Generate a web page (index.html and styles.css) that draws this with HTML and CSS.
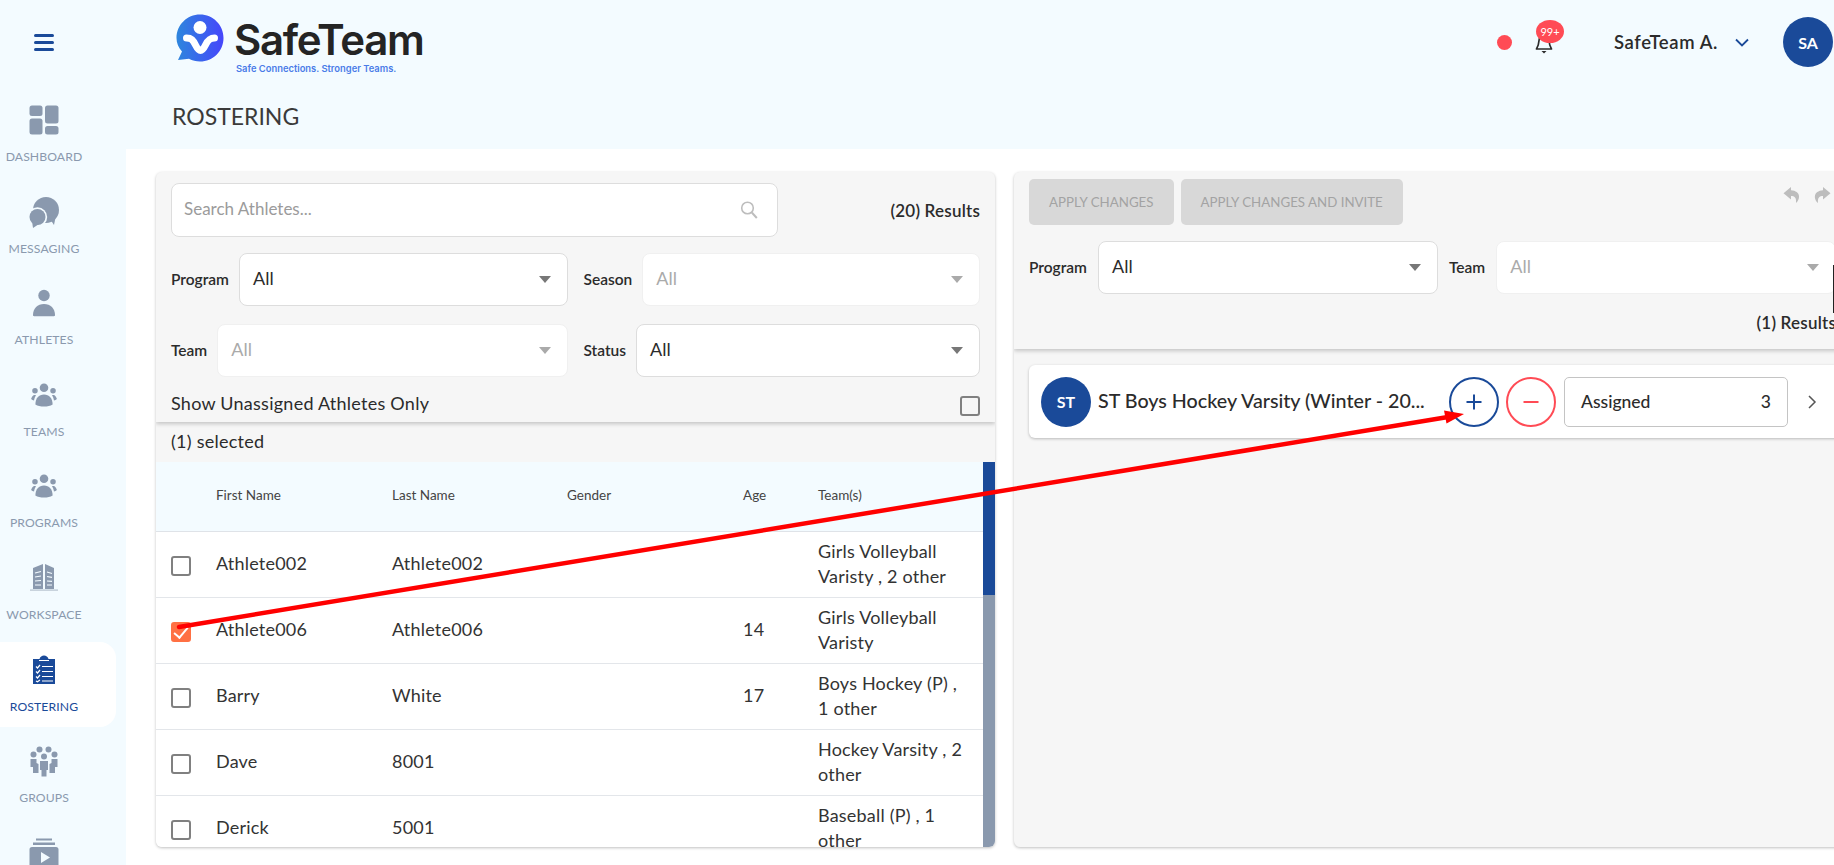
FILE: index.html
```html
<!DOCTYPE html>
<html lang="en">
<head>
  <meta charset="UTF-8">
  <meta name="viewport" content="width=device-width, initial-scale=1.0">
  <title>SafeTeam - Rostering</title>
  <link rel="stylesheet" href="styles.css">
</head>
<body>
  <div class="app">
    <aside class="sidebar">
      <div class="menu-btn"><span></span><span></span><span></span></div>
      <nav class="nav">
        <a class="nav-item">
          <svg class="nav-icon" viewBox="0 0 32 32"><rect x="1.5" y="1.5" width="13" height="10.5" rx="2.5"/><rect x="17" y="1.5" width="13.5" height="18" rx="2.5"/><rect x="1.5" y="14.5" width="13" height="16" rx="2.5"/><rect x="17" y="22" width="13.5" height="8.5" rx="2.5"/></svg>
          <span>Dashboard</span>
        </a>
        <a class="nav-item">
          <svg class="nav-icon" viewBox="0 0 32 32"><circle cx="18" cy="14" r="13"/><path d="M20 20l6 9 2-10z"/><circle class="nav-bg" cx="9.500" cy="21" r="9.700"/><circle cx="9.500" cy="21" r="8"/><path d="M4 25l1 7 6-4z"/></svg>
          <span>Messaging</span>
        </a>
        <a class="nav-item">
          <svg class="nav-icon" viewBox="0 0 32 32"><circle cx="16" cy="8.500" r="5.700"/><path d="M5 28c0-6.500 4.500-11 11-11s11 4.500 11 11c0 .8-.5 1.200-1.200 1.200H6.200C5.500 29.200 5 28.800 5 28z"/></svg>
          <span>Athletes</span>
        </a>
        <a class="nav-item">
          <svg class="nav-icon" viewBox="0 0 32 32"><use href="#people"/></svg>
          <span>Teams</span>
        </a>
        <a class="nav-item">
          <svg class="nav-icon" viewBox="0 0 32 32"><use href="#people"/></svg>
          <span>Programs</span>
        </a>
        <a class="nav-item">
          <svg class="nav-icon" viewBox="0 0 32 32"><path d="M5 6l10-4v25H5z"/><path d="M17 2l9 4v21h-9z"/><path d="M2 27.500h28v1.200H2z" opacity=".6"/><path class="nav-cut" d="M7 11l6-1.500M7 15l6-1M7 19l6-.5M7 23h6M19 10l5 1.500M19 14.500l5 .8M19 19l5 .3M19 23h5"/></svg>
          <span>Workspace</span>
        </a>
        <a class="nav-item active">
          <svg class="nav-icon" viewBox="0 0 32 32"><path d="M5 5h6.500c.5-2 2.500-3.500 4.500-3.500s4 1.500 4.500 3.500H27v25H5z"/><path class="nav-cut" d="M11 6.500h10M8 12.500l1.500 1.500 2.500-3M8 17.500l1.500 1.500 2.500-3M8 22.500l1.500 1.500 2.500-3M8 27l1.500 .8 2.500-1.800M14 12.500h11M14 17.500h11M14 22.500h11M14 27h11"/></svg>
          <span>Rostering</span>
        </a>
        <a class="nav-item">
          <svg class="nav-icon" viewBox="0 0 32 32"><circle cx="11.500" cy="4.500" r="3"/><circle cx="20.500" cy="4.500" r="3"/><circle cx="5.500" cy="9.500" r="3"/><circle cx="26.500" cy="9.500" r="3"/><circle cx="16" cy="11.500" r="3"/><path d="M2.500 14h6v4l2 1v9H5v-6H2.500zM29.500 14h-6v4l-2 1v9H27v-6h2.500z"/><path d="M12 16h8v9h-1.500v6.500h-5V25H12z"/></svg>
          <span>Groups</span>
        </a>
        <a class="nav-item">
          <svg class="nav-icon" viewBox="0 0 32 32"><path d="M8 1.500h16v2H8zM5 5.500h22v2.500H5z"/><path fill-rule="evenodd" d="M4 10h24c1.600 0 2.500 1 2.500 2.500v16c0 1.600-.9 2.500-2.500 2.500H4c-1.600 0-2.500-.9-2.500-2.500v-16C1.500 11 2.400 10 4 10zm9 5v11l9-5.500z"/></svg>
        </a>
      </nav>
    </aside>

    <div class="main">
      <header class="header">
        <div class="topbar">
          <div class="logo">
            <svg class="logo-icon" viewBox="0 0 48 48">
              <defs>
                <linearGradient id="logoGrad" x1="0" y1="0" x2="1" y2="0">
                  <stop offset="0" stop-color="#2d86dd"/>
                  <stop offset="1" stop-color="#4646fb"/>
                </linearGradient>
              </defs>
              <path fill="url(#logoGrad)" d="M24 0.500c13 0 23.500 10.500 23.500 23.500S37 47.500 24 47.500c-4 0-7.700-1-11-2.700L2 46l4-8.500C2.500 33.500.5 29 .5 24 .5 11 11 .5 24 .5z"/>
              <circle cx="24" cy="13.500" r="6.500" fill="#fff"/>
              <path d="M10.500 24c5 0 6.500 2 9 7 2 4 3.500 5.500 5 5.500s3-1.500 5-5.500c2.500-5 4.500-7 9-7" fill="none" stroke="#fff" stroke-width="7" stroke-linecap="round"/>
            </svg>
            <div class="logo-text">
              <div class="logo-name">SafeTeam</div>
              <div class="logo-tag">Safe Connections. Stronger Teams.</div>
            </div>
          </div>
          <div class="user-area">
            <span class="status-dot"></span>
            <div class="bell">
              <svg viewBox="0 0 18 22" width="18" height="22"><path d="M9 2c3 0 4.500 2.500 4.800 5.500.3 3.500.7 6 2.700 9.500H1.500c2-3.500 2.400-6 2.700-9.500C4.500 4.500 6 2 9 2z" fill="none" stroke="#2b2b2b" stroke-width="1.700" stroke-linejoin="round"/><path d="M6.500 19h5L9 21.500z" fill="#2b2b2b"/></svg>
              <span class="bell-badge">99+</span>
            </div>
            <span class="user-name">SafeTeam A.</span>
            <svg class="user-chevron" viewBox="0 0 14 9" width="14" height="9"><path d="M1 1.500l6 6 6-6" fill="none" stroke="#1a4a99" stroke-width="1.800"/></svg>
            <span class="avatar">SA</span>
          </div>
        </div>
        <h1 class="page-title">ROSTERING</h1>
      </header>

      <div class="content">
        <section class="panel panel-left">
          <div class="filters">
            <div class="search-row">
              <div class="search-box">
                <span class="search-text">Search Athletes...</span>
                <svg viewBox="0 0 20 20" width="20" height="20"><circle cx="8.500" cy="8" r="5.800" fill="none" stroke="#bdbdbd" stroke-width="1.600"/><path d="M12.800 12.500l5 5.500" stroke="#bdbdbd" stroke-width="2"/></svg>
              </div>
              <span class="results">(20) Results</span>
            </div>
            <div class="filter-row">
              <div class="filter-field">
                <label>Program</label>
                <div class="select"><span>All</span><i class="caret"></i></div>
              </div>
              <div class="filter-field">
                <label>Season</label>
                <div class="select disabled"><span>All</span><i class="caret"></i></div>
              </div>
            </div>
            <div class="filter-row">
              <div class="filter-field">
                <label>Team</label>
                <div class="select disabled"><span>All</span><i class="caret"></i></div>
              </div>
              <div class="filter-field">
                <label>Status</label>
                <div class="select"><span>All</span><i class="caret"></i></div>
              </div>
            </div>
            <div class="unassigned-row">
              <span>Show Unassigned Athletes Only</span>
              <i class="check"></i>
            </div>
          </div>
          <div class="selected-count">(1) selected</div>
          <div class="table-wrap">
            <table class="athletes">
              <colgroup>
                <col class="col-check"><col class="col-first"><col class="col-last"><col class="col-gender"><col class="col-age"><col>
              </colgroup>
              <thead>
                <tr><th></th><th>First Name</th><th>Last Name</th><th>Gender</th><th>Age</th><th>Team(s)</th></tr>
              </thead>
              <tbody>
                <tr><td><i class="check"></i></td><td>Athlete002</td><td>Athlete002</td><td></td><td></td><td>Girls Volleyball Varisty , 2 other</td></tr>
                <tr><td><i class="check checked"></i></td><td>Athlete006</td><td>Athlete006</td><td></td><td>14</td><td>Girls Volleyball Varisty</td></tr>
                <tr><td><i class="check"></i></td><td>Barry</td><td>White</td><td></td><td>17</td><td>Boys Hockey (P) , 1 other</td></tr>
                <tr><td><i class="check"></i></td><td>Dave</td><td>8001</td><td></td><td></td><td>Hockey Varsity , 2 other</td></tr>
                <tr><td><i class="check"></i></td><td>Derick</td><td>5001</td><td></td><td></td><td>Baseball (P) , 1 other</td></tr>
              </tbody>
            </table>
            <div class="scrollbar"><div class="scroll-thumb"></div></div>
          </div>
        </section>

        <section class="panel panel-right">
          <div class="filters filters-right">
            <div class="action-row">
              <button class="btn-disabled" type="button">Apply Changes</button>
              <button class="btn-disabled" type="button">Apply Changes and Invite</button>
              <div class="history">
                <svg viewBox="0 0 18 18" width="18" height="18"><path id="undoShape" d="M8 1L0.500 7.200 8 13.500V10c3.500 0 5.500 1.500 5 7 4.500-4 5-12-5-12.800z"/></svg>
                <svg class="flip" viewBox="0 0 18 18" width="18" height="18"><use href="#undoShape"/></svg>
              </div>
            </div>
            <div class="filter-row">
              <div class="filter-field">
                <label>Program</label>
                <div class="select"><span>All</span><i class="caret"></i></div>
              </div>
              <div class="filter-field">
                <label>Team</label>
                <div class="select disabled"><span>All</span><i class="caret"></i></div>
              </div>
            </div>
            <div class="results-row"><span class="results">(1) Results</span></div>
          </div>
          <div class="team-card">
            <span class="avatar team-avatar">ST</span>
            <span class="team-name">ST Boys Hockey Varsity (Winter - 20...</span>
            <span class="round-btn plus"><svg viewBox="0 0 20 20" width="20" height="20"><path d="M10 2.500v15M2.500 10h15" stroke="#1a4a99" stroke-width="2"/></svg></span>
            <span class="round-btn minus"><svg viewBox="0 0 20 20" width="20" height="20"><path d="M2.500 10h15" stroke="#ff4b55" stroke-width="2"/></svg></span>
            <div class="assigned"><span>Assigned</span><span>3</span></div>
            <svg class="card-chevron" viewBox="0 0 10 16" width="10" height="16"><path d="M2 2l6 6-6 6" fill="none" stroke="#555" stroke-width="1.500"/></svg>
          </div>
        </section>
      </div>
    </div>
  </div>

  <svg class="defs" width="0" height="0">
    <g id="people" transform="translate(16 16) scale(.86) translate(-16 -16)">
      <circle cx="16" cy="7.500" r="5"/><circle cx="5.500" cy="11" r="3.200"/><circle cx="26.500" cy="11" r="3.200"/>
      <path d="M6 27c0-7 4-11.500 10-11.500S26 20 26 27c-2.500 1.600-6 2.500-10 2.500S8.500 28.600 6 27z"/>
      <path d="M3.500 16.500c1-.6 2-.7 3.200-.2-1.200 1.800-2 4-2.300 6.200-1.300-.4-2.400-1-3.400-1.800.3-1.500 1.200-3.100 2.500-4.200zM28.500 16.500c-1-.6-2-.7-3.200-.2 1.200 1.800 2 4 2.300 6.200 1.300-.4 2.400-1 3.400-1.800-.3-1.500-1.200-3.100-2.500-4.200z"/>
    </g>
  </svg>

  <!-- annotation drawn over the screenshot -->
  <svg class="annotation" viewBox="0 0 1834 865" width="1834" height="865">
    <line x1="179" y1="627" x2="1448" y2="417" stroke="#ff0000" stroke-width="4.500" stroke-linecap="round"/>
    <polygon points="1464,414 1446.500,423.500 1444,410.500" fill="#ff0000"/>
  </svg>
  <div class="cursor-edge"></div>
</body>
</html>
```

FILE: styles.css
```css
* {
  box-sizing: border-box;
}

html, body {
  margin: 0;
  height: 100%;
  overflow: hidden;
}

body {
  font-family: "Lato", "Liberation Sans", sans-serif;
  color: #2b2b2b;
  background-color: #ffffff;
}

.app {
  display: flex;
  height: 865px;
  width: 1834px;
  overflow: hidden;
}

/* sidebar */
.sidebar {
  width: 126px;
  flex-shrink: 0;
  background-color: #f3fbff;
  overflow: hidden;
}

.menu-btn {
  width: 20px;
  height: 17px;
  margin: 34px 0 41px 34px;
  display: flex;
  flex-direction: column;
  justify-content: space-between;
}

.menu-btn span {
  height: 3px;
  border-radius: 2px;
  background-color: #1a4a99;
}

.nav-item {
  display: flex;
  flex-direction: column;
  align-items: center;
  width: 116px;
  height: 85px;
  margin-bottom: 6.6px;
  padding: 12px 28px 0 0;
  color: #8a99ae;
  font-size: 12.200px;
  letter-spacing: .1px;
  text-transform: uppercase;
  border-radius: 0 16px 16px 0;
}

.nav-icon {
  width: 32px;
  height: 32px;
  fill: #8a99ae;
  margin-bottom: 13px;
  flex-shrink: 0;
}

.nav-cut {
  fill: none;
  stroke: #f3fbff;
  stroke-width: 1.2;
}

.nav-bg {
  fill: #f3fbff;
}

.nav-item.active {
  background-color: #ffffff;
  color: #1a4a99;
}

.nav-item.active .nav-icon {
  fill: #1a4a99;
}

.nav-item.active .nav-cut {
  stroke: #ffffff;
}

/* header */
.main {
  flex: 1;
  min-width: 0;
  display: flex;
  flex-direction: column;
}

.header {
  background-color: #f3fbff;
  height: 149px;
  flex-shrink: 0;
}

.topbar {
  height: 84px;
  display: flex;
  align-items: center;
  padding-left: 50px;
}

.logo {
  display: flex;
  align-items: flex-start;
  margin-top: 4px;
}

.logo-icon {
  width: 48px;
  height: 48px;
  margin-right: 10px;
}

.logo-text {
  margin-top: 1px;
}

.logo-name {
  font-family: "Inter", sans-serif;
  font-size: 42px;
  font-weight: 600;
  letter-spacing: -1.3px;
  line-height: 46px;
  padding-top: 2px;
  color: #242424;
}

.logo-tag {
  font-family: "Inter", sans-serif;
  font-size: 9.400px;
  font-weight: 600;
  line-height: 12px;
  color: #4a7be8;
  margin-left: 2px;
}

.user-area {
  margin-left: auto;
  display: flex;
  align-items: center;
}

.status-dot {
  width: 15px;
  height: 15px;
  border-radius: 50%;
  background-color: #ff4b55;
  margin-right: 23px;
}

.bell {
  position: relative;
  width: 18px;
  height: 22px;
  margin-top: 2px;
  margin-right: 61px;
}

.bell-badge {
  position: absolute;
  left: 1px;
  top: -12px;
  width: 28px;
  height: 23px;
  border-radius: 50%;
  background-color: #ff4b55;
  color: #ffffff;
  font-size: 11px;
  line-height: 23px;
  text-align: center;
}

.user-name {
  font-size: 18.500px;
  font-weight: 600;
  letter-spacing: .6px;
  margin-right: 17px;
}

.user-chevron {
  margin-right: 34px;
}

.avatar {
  width: 50px;
  height: 50px;
  border-radius: 50%;
  background-color: #1a4a99;
  color: #ffffff;
  font-size: 16px;
  font-weight: 700;
  display: flex;
  align-items: center;
  justify-content: center;
  margin-right: 1px;
  flex-shrink: 0;
}

.page-title {
  margin: 0;
  padding-left: 46px;
  font-size: 23px;
  font-weight: 400;
  line-height: 65px;
  color: #3a3a3a;
}

/* panels */
.content {
  flex: 1;
  display: flex;
  gap: 19px;
  padding: 23px 0 18px 30px;
  min-height: 0;
}

.panel {
  width: 839px;
  flex-shrink: 0;
  background-color: #f6f6f6;
  border-radius: 6px;
  box-shadow: 0 1px 3px rgba(0, 0, 0, 0.25);
  overflow: hidden;
  display: flex;
  flex-direction: column;
}

.panel-right {
  width: 842px;
}

.filters {
  padding: 11px 15px 0;
  height: 250px;
  box-shadow: 0 2px 4px rgba(0, 0, 0, 0.2);
  position: relative;
  flex-shrink: 0;
}

.search-row {
  display: flex;
  align-items: center;
  justify-content: space-between;
  margin-bottom: 16px;
}

.search-box {
  width: 607px;
  height: 54px;
  background-color: #ffffff;
  border: 1px solid #dddddd;
  border-radius: 8px;
  padding: 0 18px 0 12px;
  display: flex;
  align-items: center;
  justify-content: space-between;
  font-size: 17px;
  color: #9b9b9b;
}

.search-text {
  margin-bottom: 3px;
}

.results {
  font-size: 17px;
  font-weight: 600;
  letter-spacing: .2px;
}

.filter-row {
  display: flex;
  gap: 16px;
  margin-bottom: 18px;
}

.filter-field {
  flex: 1;
  min-width: 0;
  display: flex;
  align-items: center;
}

.filter-field label {
  font-size: 15.500px;
  font-weight: 600;
  margin-right: 10px;
  margin-bottom: 2px;
}

.select {
  flex: 1;
  height: 53px;
  background-color: #ffffff;
  border: 1px solid #dddddd;
  border-radius: 8px;
  padding: 0 16px 0 13px;
  display: flex;
  align-items: center;
  justify-content: space-between;
  font-size: 18px;
}

.select span {
  margin-bottom: 3px;
}

.select.disabled {
  border-color: #f0f0f0;
  color: #aaaaaa;
}

.caret {
  width: 0;
  height: 0;
  border-left: 6.5px solid transparent;
  border-right: 6.5px solid transparent;
  border-top: 7px solid #777777;
}

.select.disabled .caret {
  border-top-color: #aaaaaa;
}

.unassigned-row {
  display: flex;
  align-items: center;
  justify-content: space-between;
  font-size: 18px;
  letter-spacing: .25px;
  margin-top: -3px;
}

.unassigned-row span {
  margin-bottom: 6px;
}

.check {
  display: block;
  width: 20px;
  height: 20px;
  border: 2px solid #808080;
  border-radius: 3px;
  background-color: #ffffff;
  position: relative;
}

.unassigned-row .check {
  background-color: transparent;
}

.check.checked {
  background-color: #ff7043;
  border-color: #ff7043;
}

.check.checked::after {
  content: "";
  position: absolute;
  left: 4px;
  top: 0;
  width: 6px;
  height: 12px;
  border: solid #ffffff;
  border-width: 0 2px 2px 0;
  transform: rotate(40deg);
}

.selected-count {
  height: 40px;
  line-height: 38px;
  padding-left: 15px;
  font-size: 18px;
  letter-spacing: .25px;
  flex-shrink: 0;
}

/* table */
.table-wrap {
  flex: 1;
  min-height: 0;
  display: flex;
  background-color: #ffffff;
  overflow: hidden;
}

.athletes {
  flex: 1;
  width: 827px;
  table-layout: fixed;
  border-collapse: collapse;
  align-self: flex-start;
}

.col-check { width: 60px; }
.col-first { width: 176px; }
.col-last { width: 175px; }
.col-gender { width: 176px; }
.col-age { width: 75px; }

.athletes th {
  height: 69px;
  background-color: #f3fbff;
  border-bottom: 1px solid #dfe3e8;
  font-size: 13.500px;
  font-weight: 400;
  color: #444444;
  text-align: left;
  padding: 0 0 2px;
}

.athletes td {
  height: 66px;
  border-bottom: 1px solid #e3e6ea;
  font-size: 18px;
  letter-spacing: .2px;
  line-height: 25px;
  color: #333333;
  padding: 0 14px 2px 0;
}

.athletes td:first-child {
  padding: 3px 0 0 15px;
}

.athletes td:last-child {
  padding-bottom: 1px;
}

.scrollbar {
  width: 12px;
  flex-shrink: 0;
  background-color: #8a99ae;
}

.scroll-thumb {
  height: 133px;
  background-color: #1a4a99;
}

/* right panel */
.filters-right {
  height: 177px;
  padding: 7px 19px 0 15px;
}

.action-row {
  display: flex;
  gap: 7px;
  margin-bottom: 16px;
}

.btn-disabled {
  height: 46px;
  border: none;
  border-radius: 5px;
  background-color: #d8d8d8;
  color: #a3a3a3;
  font-family: inherit;
  font-size: 13.300px;
  text-transform: uppercase;
  padding: 0 20px;
}

.history {
  margin-left: auto;
  margin-right: 6px;
  display: flex;
  gap: 12px;
  padding-top: 7px;
  fill: #bdbdbd;
}

.flip {
  transform: scaleX(-1);
}

.filters-right .filter-row {
  gap: 11px;
}

.filters-right .filter-field {
  flex: none;
}

.filters-right .filter-field label {
  margin-right: 11px;
}

.filters-right .select {
  flex: none;
  width: 340px;
}

.results-row {
  display: flex;
  justify-content: flex-end;
  margin-right: 1px;
  margin-top: 3px;
}

.team-card {
  margin: 16px 0 0 15px;
  width: 812px;
  height: 73px;
  background-color: #ffffff;
  border-radius: 6px;
  box-shadow: 0 1px 3px rgba(0, 0, 0, 0.25);
  display: flex;
  align-items: center;
  padding-left: 12px;
}

.team-avatar {
  margin-right: 7px;
}

.team-name {
  width: 330px;
  margin-right: 21px;
  margin-bottom: 2px;
  font-size: 19.700px;
  font-weight: 500;
  white-space: nowrap;
}

.round-btn {
  width: 50px;
  height: 50px;
  border-radius: 50%;
  background-color: #ffffff;
  display: flex;
  align-items: center;
  justify-content: center;
  margin-right: 8px;
  flex-shrink: 0;
}

.round-btn.plus {
  border: 2px solid #1a4a99;
  margin-right: 7px;
}

.round-btn.minus {
  border: 2px solid #ff4b55;
}

.assigned {
  width: 224px;
  height: 50px;
  border: 1px solid #c4c4c4;
  border-radius: 5px;
  padding: 0 16px;
  display: flex;
  align-items: center;
  justify-content: space-between;
  font-size: 17.500px;
  font-weight: 500;
}

.card-chevron {
  margin-left: 19px;
}

.defs {
  position: absolute;
}

.annotation {
  position: absolute;
  left: 0;
  top: 0;
  pointer-events: none;
}

.cursor-edge {
  position: absolute;
  right: 0;
  top: 265px;
  width: 1.500px;
  height: 48px;
  background-color: #222222;
}
```
